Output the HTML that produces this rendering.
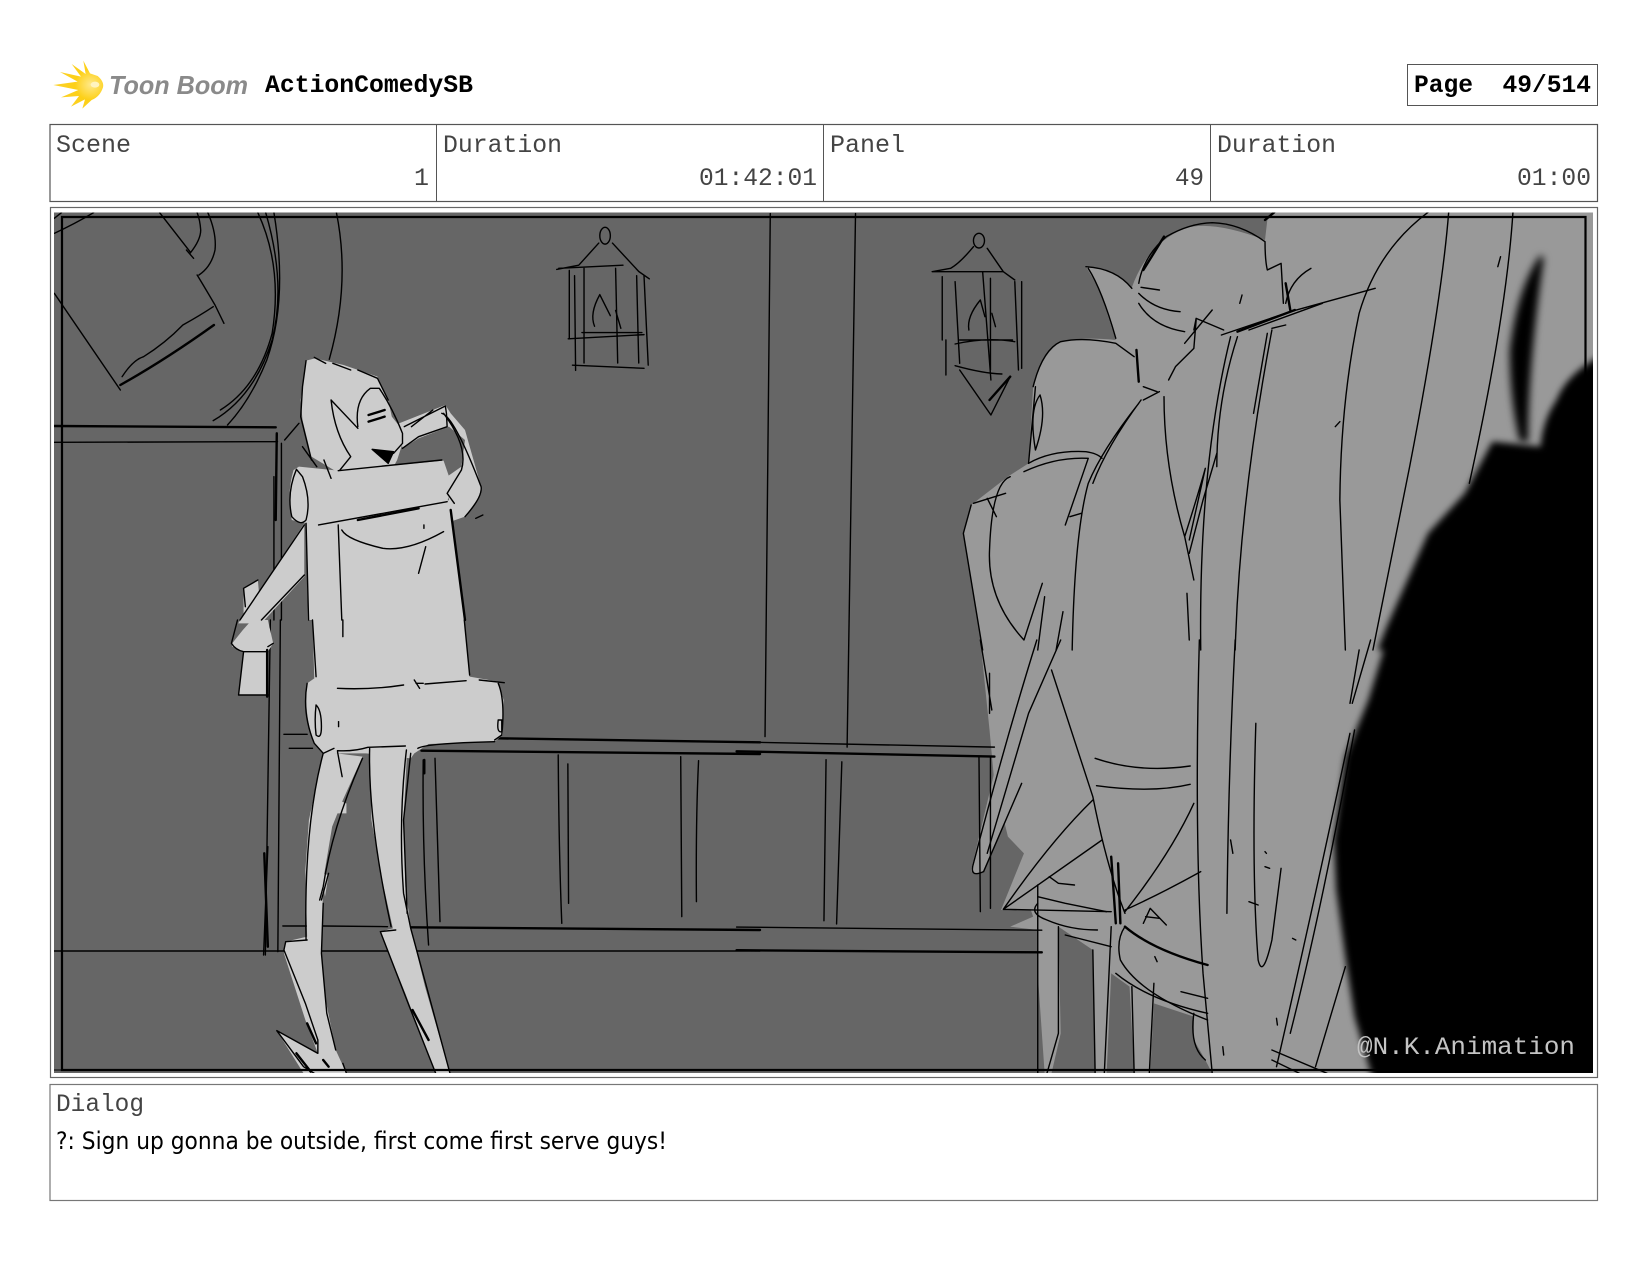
<!DOCTYPE html>
<html><head><meta charset="utf-8"><style>
html,body{margin:0;padding:0;background:#fff;width:1650px;height:1275px;overflow:hidden}
svg{display:block}
path,ellipse{vector-effect:non-scaling-stroke}
.s path,.s ellipse{fill:none;stroke:#000;stroke-width:1.4;stroke-linecap:round;stroke-linejoin:round}
.s path.t{stroke-width:2.4}
.s path.h{stroke-width:1}
.m{font-family:"Liberation Mono",monospace;font-size:25px;fill:#444}
.b{font-family:"Liberation Mono",monospace;font-size:25px;font-weight:bold;fill:#000}
</style></head><body>
<svg width="1650" height="1275" viewBox="0 0 1650 1275" xmlns="http://www.w3.org/2000/svg">
<defs>
<clipPath id="c"><rect x="54" y="212.500" width="1539" height="860.500"/></clipPath>
<filter id="bl" x="-20%" y="-20%" width="140%" height="140%"><feGaussianBlur stdDeviation="3.500"/></filter>
<filter id="bl2" x="-80%" y="-20%" width="260%" height="140%"><feGaussianBlur stdDeviation="4"/></filter>
<radialGradient id="sun" cx="0.75" cy="0.5" r="0.8"><stop offset="0" stop-color="#ffe98a"/><stop offset="0.4" stop-color="#fdd017"/><stop offset="1" stop-color="#fbd22e"/></radialGradient>
</defs>

<!-- logo -->
<g transform="translate(45,50) scale(0.3333)">
<path fill="url(#sun)" d="M115 32 L135 70 L158 78 Q178 95 174 112 Q165 140 140 150 L112 176 L120 148 L78 170 L102 138 L48 142 L100 120 L25 105 L98 95 L45 66 L108 80 L80 42 L122 72 Z"/>
<ellipse cx="150" cy="104" rx="13" ry="9" fill="#fff4c0"/>
</g>
<text x="109" y="94" font-family="'Liberation Sans',sans-serif" font-style="italic" font-weight="bold" font-size="26" fill="#8a8a8a" textLength="139" lengthAdjust="spacingAndGlyphs">Toon Boom</text>
<text class="b" x="265" y="92" textLength="208" lengthAdjust="spacingAndGlyphs">ActionComedySB</text>

<!-- page box -->
<rect x="1407.500" y="64.500" width="190" height="41" fill="#fff" stroke="#555" stroke-width="1"/>
<text class="b" x="1414" y="92" textLength="177" lengthAdjust="spacingAndGlyphs" xml:space="preserve">Page  49/514</text>

<!-- header table -->
<rect x="50" y="124.500" width="1547.500" height="77" fill="#fff" stroke="#555" stroke-width="1.200"/>
<path d="M436.500 124V201 M823.500 124V201 M1210.500 124V201" stroke="#555" stroke-width="1"/>
<text class="m" x="56" y="152" textLength="75" lengthAdjust="spacingAndGlyphs">Scene</text>
<text class="m" x="443" y="152" textLength="119" lengthAdjust="spacingAndGlyphs">Duration</text>
<text class="m" x="830" y="152" textLength="75" lengthAdjust="spacingAndGlyphs">Panel</text>
<text class="m" x="1217" y="152" textLength="119" lengthAdjust="spacingAndGlyphs">Duration</text>
<text class="m" x="414" y="185" textLength="15" lengthAdjust="spacingAndGlyphs">1</text>
<text class="m" x="699" y="185" textLength="118" lengthAdjust="spacingAndGlyphs">01:42:01</text>
<text class="m" x="1175" y="185" textLength="29" lengthAdjust="spacingAndGlyphs">49</text>
<text class="m" x="1517" y="185" textLength="74" lengthAdjust="spacingAndGlyphs">01:00</text>

<!-- image frame -->
<rect x="50.500" y="207.500" width="1547" height="870" fill="#fff" stroke="#666" stroke-width="1.200"/>

<g clip-path="url(#c)">
<rect x="54" y="212" width="1540" height="862" fill="#666"/>

<!-- crowd fills -->
<g transform="translate(900,200) scale(0.45914,0.33333)" fill="#999">
<path d="M405 200 Q465 200 505 262 Q540 130 620 85 Q680 60 795 120 L800 60 L815 37 L1510 37 L1510 1350 L180 1350 L138 1000 L155 915 L235 830 L280 790 L290 560 Q310 460 350 425 Q400 410 470 420 L435 270 Z"/>
</g>
<g transform="translate(900,640) scale(0.45914,0.33333)" fill="#999">
<path d="M175 0 L195 270 L205 420 L235 590 L270 640 L220 810 L285 810 L290 830 L240 860 L300 870 L300 1000 L315 1300 L330 1300 L350 1180 L345 860 L420 930 L425 1300 L450 1300 L460 1000 L500 1040 L510 1300 L545 1300 L553 1090 L640 1130 L640 1200 L665 1260 L680 1300 L1510 1300 L1510 0 Z"/>
<path d="M155 690 Q160 715 182 692 L265 440 L205 400 Z"/>
</g>

<!-- wall lines in display coords -->
<g class="s" transform="scale(1.0523)">
<path d="M732 203 L727 700"/>
<path d="M813 203 L805 710"/>
<ellipse cx="575" cy="224" rx="5" ry="8"/>
<path d="M569 231 L550 252 L529 256 M531 255 L592 252 M582 231 L607 258 L617 265"/>
<path d="M541 257 L541 322 M546 262 L547 352 M555 255 L555 345 M585 255 L587 345 M605 262 L607 345 M612 262 L616 347"/>
<path d="M540 322 L612 318 M553 316 L610 316 M544 347 L612 350"/>
<path d="M570 280 Q560 298 565 310 M570 280 L580 300 M585 295 L590 312"/>
<path d="M785 722 L783 875 M800 724 L795 878"/>
<path d="M700 705 L945 710" />
<path class="t" d="M700 714 L945 719"/>
<path d="M700 881 L990 884"/>
<path class="t" d="M700 903 L990 905"/>
</g>

<!-- upper left wall -->
<g class="s" transform="translate(40,200) scale(0.35714,0.33333)">
<path d="M40 100 Q100 70 150 38 M60 38 L40 55"/>
<path d="M335 38 L420 155 M410 150 L430 175 M420 160 Q450 120 450 90 Q448 60 440 38 M470 38 Q495 100 490 150 Q480 200 445 225 M440 225 Q460 260 490 315 L515 370 M40 280 L225 570"/>
<path class="t" d="M225 555 Q350 480 487 375"/>
<path d="M230 530 Q260 480 290 470 Q350 430 400 375 Q450 345 485 320"/>
<path d="M610 38 Q680 200 650 400 Q610 560 505 630 M632 38 Q690 250 650 420 Q600 590 485 662 M655 38 Q695 300 635 480 Q590 600 525 675 M830 38 Q870 250 810 478"/>
<path class="t" d="M40 678 L660 682"/>
<path d="M40 727 L665 725 M676 730 L676 1260"/>
<path class="t" d="M663 700 L660 960"/>
<path d="M655 830 L655 1260 M685 720 L725 670"/>
</g>
<g class="s" transform="translate(200,620) scale(0.35714,0.33333)">
<path d="M197 0 L183 1005 M225 0 L218 995 M190 680 L178 1005"/>
<path class="t" d="M180 700 L190 980"/>
<path d="M235 343 L300 343 M250 385 L315 385 M232 918 L300 918 M345 918 L525 920"/>
<path d="M-410 993 L1568 993"/>
<path class="t" d="M835 355 L1568 367"/>
<path class="t" d="M620 392 L1568 402"/>
<path class="t" d="M590 922 L1568 930"/>
<path d="M625 420 Q622 700 640 975 M658 415 L672 905 M1003 405 Q1005 700 1013 910 M1030 432 L1032 850 M1346 410 L1349 890 M1396 422 Q1388 600 1390 845"/>
<path class="t" d="M628 420 L628 460"/>
</g>

<!-- character 1 fills -->
<g transform="translate(40,200) scale(0.35714,0.33333)" fill="#ccc">
<path d="M745 482 L770 475 L850 495 L945 530 L975 600 L985 650 L1015 690 L1015 730 L1000 780 L990 800 L830 815 L760 770 L735 660 L730 600 Z"/>
<path d="M1005 670 L1135 615 L1150 640 L1190 690 L1235 860 L1230 890 L1190 950 L1150 965 L1140 830 L1180 800 L1190 720 L1145 680 L1060 715 L1015 745 Z"/>
<path d="M725 800 L835 812 L1130 782 L1155 860 L1140 905 L780 975 L745 970 L705 960 Q690 880 710 810 Z"/>
<path d="M745 960 L1150 900 L1190 1260 L750 1260 Z"/>
<path d="M740 970 L740 1130 L620 1270 L555 1270 Z"/>
<path d="M570 1165 L610 1140 L615 1200 L570 1240 Z"/>
</g>
<g transform="translate(200,620) scale(0.35714,0.33333)" fill="#ccc">
<path d="M90 70 L120 30 L145 0 L190 0 L205 70 L190 95 L190 225 L108 225 L122 95 L90 80 Z"/>
<path d="M315 0 L740 0 L755 170 L835 185 L850 240 L848 345 L825 365 L640 372 L600 400 L590 415 L465 400 L345 400 L320 370 Q290 280 300 190 L320 175 Z"/>
<path d="M475 385 L580 390 L570 600 L575 800 L590 925 L630 1100 L700 1360 L660 1360 L575 1120 L505 935 L540 925 L510 780 L480 600 Z"/>
<path d="M345 395 L455 410 L400 540 L370 620 L345 780 L340 1000 L350 1130 L380 1290 L410 1360 L290 1360 L215 1232 L330 1300 L295 1200 L235 1000 L240 965 L300 950 L295 750 L305 600 Z"/>
<path d="M385 540 L410 550 L410 580 L385 580 Z M340 760 L360 765 L350 830 Z"/>
</g>

<!-- character 1 lines -->
<g class="s" transform="translate(40,200) scale(0.35714,0.33333)">
<path d="M745 482 L735 560 L730 650 L760 780 M768 472 L800 490 M820 490 L870 510 M890 510 L945 535 L975 600 M735 740 L775 800 M795 780 L815 835"/>
<path d="M815 600 L890 685 M815 600 Q825 700 870 770 L840 810 M890 680 Q880 600 925 565 L950 565 Q985 620 1015 700 L1015 730 L990 760"/>
<path class="t" d="M920 645 L965 630 M920 665 L965 650"/>
<path d="M930 748 L990 755 L975 790 Z" style="fill:#000"/>
<path d="M1020 680 L1135 618 L1138 640 L1140 680 L1060 710 L1015 745 M1040 680 L1100 630"/>
<path d="M1125 640 Q1160 650 1235 860 Q1240 890 1190 950 M1130 640 Q1200 740 1180 810 L1140 880 L1160 910"/>
<path d="M835 812 L1125 780"/>
<path d="M718 808 Q690 880 705 950 Q730 980 745 960 Q760 900 735 830 L718 808"/>
<path d="M780 975 L1140 905"/>
<path class="t" d="M890 960 L1060 925"/>
<path d="M845 990 Q860 1020 960 1045 Q1030 1055 1130 995 M835 975 L845 1260 M1080 1040 L1060 1120"/>
<path class="t" d="M1150 930 L1190 1260"/>
<path d="M745 970 L752 1260 M740 975 L560 1260 M740 1125 L620 1260 M570 1165 L610 1140 M570 1165 L575 1220"/>
<path d="M1075 975 L1075 985 M1220 955 L1240 945"/>
</g>
<g class="s" transform="translate(200,620) scale(0.35714,0.33333)">
<path d="M105 0 L88 70 Q100 90 122 95 L108 225 L190 225 M190 80 L205 70 M122 95 L190 95"/>
<path class="t" d="M188 90 L188 230"/>
<path d="M315 0 L325 170 M740 0 L755 165"/>
<path d="M400 0 L400 50"/>
<path d="M385 205 Q480 210 570 195 M630 192 L745 182 M782 180 L852 188 M600 180 L615 205 M605 190 L625 190"/>
<path d="M300 190 Q285 280 320 370 L345 400 L375 385 M325 255 Q320 300 325 345 Q340 360 340 320 Q340 270 325 255 M835 190 Q855 240 845 345 L825 360 M835 300 Q830 340 845 335 L845 300 Z"/>
<path d="M388 305 L388 320"/>
<path d="M385 392 Q430 395 470 382 L575 378 M610 385 Q630 370 825 365 M385 395 L398 470"/>
<path d="M345 400 Q290 620 297 960 M455 415 Q370 620 345 800 L335 840 M360 760 L340 840"/>
<path d="M300 960 L240 965 L235 990 L295 1150 L330 1260 L330 1300 L215 1232 L290 1340 L320 1360"/>
<path d="M345 850 L340 1000 L355 1180 L380 1290 M400 1330 L410 1360"/>
<path d="M475 385 Q470 600 535 920"/>
<path d="M578 390 Q555 600 570 820 L590 925 L700 1360 M590 400 L570 600 L580 880"/>
<path d="M505 935 L548 930 M505 935 L590 1170 L660 1360"/>
<path class="t" d="M595 1170 L640 1260"/>
<path class="t" d="M300 1210 L325 1270 M270 1300 L310 1355 M345 1320 L360 1340"/>
</g>

<!-- crowd lines -->
<g class="s" transform="translate(900,200) scale(0.45914,0.33333)">
<ellipse cx="172" cy="122" rx="12" ry="22"/>
<path d="M160 140 Q130 190 110 205 L70 215 L225 215 M190 145 L225 215 L250 240"/>
<path d="M92 230 L92 420 M120 245 L130 490 M180 215 L198 540 M197 235 L197 510 M250 245 L258 510 M265 245 L265 505 M100 420 L100 525"/>
<path d="M120 432 Q190 410 250 425 M130 420 L245 420 M120 497 Q180 520 222 522"/>
<path d="M130 510 L198 645 L240 530"/>
<path class="t" d="M195 600 L240 530"/>
<path d="M175 300 Q145 350 150 390 M175 300 L185 350 M200 340 L208 380"/>
<path d="M405 200 Q470 205 505 265 M410 205 Q440 270 470 415"/>
<path d="M520 250 Q530 170 580 110 Q630 70 680 68 Q740 70 795 125 Q795 180 800 210 L830 190 L835 310"/>
<path class="t" d="M530 210 L575 110"/>
<path class="t" d="M795 60 L815 37"/>
<path d="M525 262 L565 270 M520 280 Q555 330 610 335 M520 310 Q550 380 620 395 M745 285 L740 310"/>
<path d="M640 390 L645 355 L705 390 M645 360 L640 445 L600 500 L585 540 M680 330 L620 430"/>
<path class="t" d="M735 395 L860 330"/>
<path d="M700 405 L850 335 L1035 265 M760 390 L920 310 M810 385 L840 375 M895 205 Q850 240 840 310"/>
<path class="t" d="M840 250 L850 330"/>
<path d="M1150 37 Q1040 150 1000 340 Q960 600 958 900 L970 1350"/>
<path d="M1195 37 Q1180 300 1110 800 L1030 1350 M1335 37 Q1320 350 1240 850"/>
<path d="M720 410 Q650 800 655 1350 M810 390 Q740 900 730 1350 M735 410 Q690 600 690 800 M800 400 L770 640"/>
<path class="t" d="M515 450 L520 545"/>
<path d="M290 560 Q310 450 350 425 Q400 410 470 430 L510 470 M305 585 Q320 650 295 750 Q280 630 305 585 M295 560 L280 790"/>
<path d="M280 790 Q330 750 405 755 Q430 760 440 775 M270 815 Q340 770 410 775 L360 975 M370 950 L395 940"/>
<path d="M520 610 Q440 750 410 850 Q380 1000 375 1350 M525 600 Q450 740 420 850 M530 560 L560 575 M530 600 L565 575"/>
<path d="M195 1050 Q200 850 240 830 M195 1050 Q190 1200 270 1320 L310 1150 M155 915 L138 1000 L180 1350 M160 910 L230 880 M190 895 L210 950"/>
<path d="M355 1235 L340 1350 M315 1190 L300 1350"/>
<path d="M575 590 Q575 800 620 1010 L640 1140 M620 1010 Q650 880 665 805 L630 1020"/>
<path d="M690 760 L660 900 L630 1060"/>
<path d="M1308 170 L1302 200 M958 665 L948 680 M625 1180 L630 1320"/>
</g>
<g class="s" transform="translate(900,640) scale(0.45914,0.33333)">
<path d="M175 0 L200 210 M195 100 L195 220"/>
<path d="M298 0 Q230 300 160 670 Q150 715 182 695 L265 430"/>
<path d="M350 0 L280 220 L190 640"/>
<path d="M330 90 L420 470 Q450 680 490 820"/>
<path d="M420 480 Q330 600 225 808 L460 815 M440 600 L225 808"/>
<path d="M640 490 Q590 640 490 815 M655 695 Q570 760 490 810"/>
<path d="M652 0 Q640 600 660 1000 L680 1300 M730 0 Q715 400 712 820 M775 250 Q765 700 780 960 Q790 1020 810 900 L830 685"/>
<path d="M425 355 Q520 400 632 378 M428 437 Q550 460 632 433"/>
<path d="M1025 0 L985 190 M1000 30 L980 190 M980 280 Q900 800 820 1280 M970 980 L905 1280 M810 1230 L930 1300 M810 1260 L870 1300 M990 270 Q920 800 850 1180"/>
<path d="M300 735 L300 1300 M345 860 L345 1180 L320 1300 M420 930 L425 1300 M460 860 L445 1300 M505 1040 L510 1300 M553 1030 L543 1300"/>
<path class="t" d="M460 650 L470 850 M475 670 L480 850"/>
<path d="M490 860 Q470 900 480 960 Q520 1060 670 1140"/>
<path class="t" d="M490 860 Q550 930 670 975"/>
<path d="M470 1000 Q540 1080 670 1120 M612 1055 L670 1075 M640 1120 Q630 1220 665 1260"/>
<path d="M300 790 Q280 820 320 840 Q370 870 430 870 M360 885 L460 920 M530 850 L545 805 L580 855 M535 830 L565 835"/>
<path d="M300 770 L360 790 L450 815"/>
<path d="M325 710 L345 730 L380 735 M172 350 L175 815 M197 350 L197 805"/>
<path d="M720 600 L725 640 M795 635 L798 640 M795 680 L805 685 M760 785 L780 795 M855 895 L862 900 M820 1135 L822 1155 M703 1220 L705 1245 M555 950 L560 965"/>
</g>

<!-- inner frame -->
<path d="M62 217 H1585.500 V1070 H62 Z" fill="none" stroke="#000" stroke-width="2.200"/>
<path d="M54 1070 H1585" stroke="#000" stroke-width="1"/>

<!-- black silhouette -->
<g filter="url(#bl)">
<g transform="translate(900,200) scale(0.45914,0.33333)">
<path d="M1560 440 L1510 480 Q1450 530 1430 600 Q1400 660 1395 740 L1290 725 L1230 880 L1150 1000 L1060 1280 L1040 1350 L1560 1350 Z" fill="#000"/>
</g>
<g transform="translate(900,640) scale(0.45914,0.33333)">
<path d="M1060 0 L1020 180 L970 350 L945 600 L950 750 L970 950 L990 1130 L1030 1320 L1560 1320 L1560 0 Z" fill="#000"/>
</g>
</g>
<g filter="url(#bl2)">
<g transform="translate(900,200) scale(0.45914,0.33333)">
<path d="M1395 165 Q1345 260 1328 450 Q1328 600 1350 725 L1368 725 Q1368 500 1402 175 Z" fill="#000"/>
</g>
</g>
<rect x="1593" y="212" width="10" height="862" fill="#fff"/>
<text x="1357" y="1054" font-family="'Liberation Mono',monospace" font-size="25" fill="#c4c4c4" textLength="218" lengthAdjust="spacingAndGlyphs">@N.K.Animation</text>
</g>

<!-- dialog -->
<rect x="50" y="1084.500" width="1547.500" height="116" fill="#fff" stroke="#777" stroke-width="1.200"/>
<text class="m" x="56" y="1111" textLength="88" lengthAdjust="spacingAndGlyphs">Dialog</text>
<text x="56" y="1149" font-family="'DejaVu Sans',sans-serif" font-size="24" fill="#000" textLength="611" lengthAdjust="spacingAndGlyphs">?: Sign up gonna be outside, first come first serve guys!</text>
</svg>
</body></html>
